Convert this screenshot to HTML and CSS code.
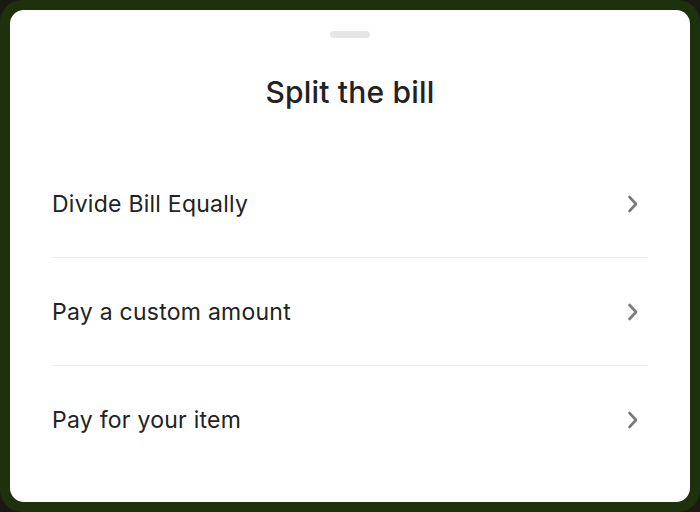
FILE: index.html
```html
<!DOCTYPE html>
<html>
<head>
<meta charset="utf-8">
<link rel="stylesheet" href="styles.css">
</head>
<body>
<div class="frame">
  <div class="sheet">
    <div class="handle"></div>
    <h1 class="title">Split the bill</h1>
    <ul class="options">
      <li class="option"><span class="label">Divide Bill Equally</span>
        <svg class="chev" width="14" height="18" viewBox="0 0 14 18"><path d="M3.5 2 L10 9 L3.5 16" fill="none" stroke="#7b7b7b" stroke-width="2.6" stroke-linecap="round" stroke-linejoin="round"/></svg></li>
      <li class="option"><span class="label">Pay a custom amount</span>
        <svg class="chev" width="14" height="18" viewBox="0 0 14 18"><path d="M3.5 2 L10 9 L3.5 16" fill="none" stroke="#7b7b7b" stroke-width="2.6" stroke-linecap="round" stroke-linejoin="round"/></svg></li>
      <li class="option"><span class="label">Pay for your item</span>
        <svg class="chev" width="14" height="18" viewBox="0 0 14 18"><path d="M3.5 2 L10 9 L3.5 16" fill="none" stroke="#7b7b7b" stroke-width="2.6" stroke-linecap="round" stroke-linejoin="round"/></svg></li>
    </ul>
  </div>
</div>
</body>
</html>
```
FILE: styles.css
```css
html, body {
  margin: 0;
  padding: 0;
  background: #1a1a14;
}
.frame {
  width: 700px;
  height: 512px;
  box-sizing: border-box;
  padding: 10px;
  background: #1f300c;
  border-radius: 22px;
}
.sheet {
  height: 100%;
  background: #ffffff;
  border-radius: 14px;
  padding: 21px 42px 0;
  box-sizing: border-box;
  display: flex;
  flex-direction: column;
  align-items: stretch;
  font-family: Inter, "Noto Sans", sans-serif;
  color: #222222;
}
.handle {
  align-self: center;
  width: 40px;
  height: 7px;
  border-radius: 4px;
  background: #e6e6e6;
}
.title {
  margin: 36px 0 0;
  text-align: center;
  font-size: 30px;
  font-weight: 500;
  line-height: 36px;
  letter-spacing: 0.2px;
}
.options {
  list-style: none;
  margin: 40px 0 0;
  padding: 0;
}
.option {
  height: 107px;
  display: flex;
  align-items: center;
  justify-content: space-between;
  border-bottom: 1px solid #ebebeb;
}
.option:last-child {
  border-bottom: none;
}
.label {
  font-size: 23px;
  font-weight: 400;
  letter-spacing: 0.25px;
}
.chev {
  margin-right: 8px;
}
```
